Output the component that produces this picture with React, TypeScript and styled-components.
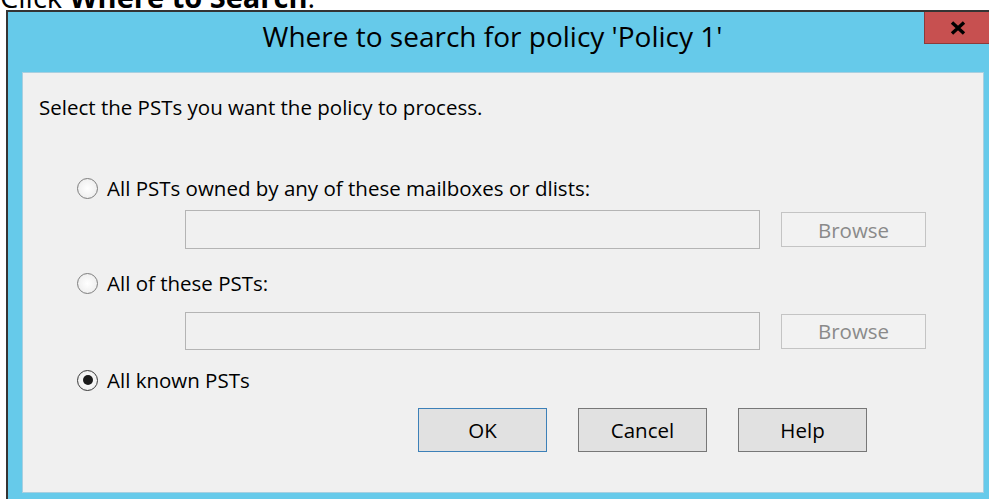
import React, { FunctionComponent } from "react";
import styled, { createGlobalStyle } from "styled-components";

const GlobalStyle = createGlobalStyle`
    html, body {
        margin: 0;
        padding: 0;
        background: #ffffff;
        overflow: hidden;
    }
    body {
        font-family: "Open Sans", "Noto Sans", sans-serif;
        color: #000000;
    }
`;

const Page = styled.div`
    width: 989px;
    height: 499px;
    overflow: hidden;
    background: #ffffff;
`;

// only the lower edge of the caption line shows above the dialog
const Caption = styled.div`
    height: 10px;
    overflow: hidden;
    font-family: "Open Sans", sans-serif;
    font-size: 29px;
    line-height: 29px;
    white-space: nowrap;

    span {
        display: block;
        margin-top: -18px;
    }
`;

const Window = styled.div`
    margin-left: 6px;
    width: 992px;
    box-sizing: border-box;
    border-left: 2px solid #343434;
    border-top: 2px solid #343434;
    background: #66caea;
`;

const TitleBar = styled.div`
    display: flex;
    align-items: flex-start;
    height: 60px;
    padding-left: 53px;
`;

const Title = styled.div`
    flex: 1;
    text-align: center;
    font-size: 28px;
    line-height: 48px;
    color: #000000;
    white-space: nowrap;
`;

const CloseButton = styled.div`
    width: 68px;
    height: 32px;
    margin-right: 6px;
    box-sizing: border-box;
    background: #c75050;
    border: 1px solid #8c3a3a;
    border-top: none;
    display: flex;
    align-items: center;
    justify-content: center;
`;

const Frame = styled.div`
    padding: 0 14px 7px 14px;
`;

const Panel = styled.div`
    height: 421px;
    box-sizing: border-box;
    background: #f0f0f0;
    border: 1px solid #a8cfe0;
    padding: 22px 16px 0 16px;
    display: flex;
    flex-direction: column;
`;

const Intro = styled.div`
    font-size: 20.5px;
    line-height: 24px;
`;

const Options = styled.div`
    display: flex;
    flex-direction: column;
    padding-left: 38px;
`;

const RadioRow = styled.label<{ $gap: number }>`
    display: flex;
    align-items: center;
    gap: 9px;
    height: 24px;
    margin-top: ${(p) => p.$gap}px;
    font-size: 20.5px;
    line-height: 24px;
`;

const RadioCircle = styled.span<{ $checked?: boolean }>`
    width: 21px;
    height: 21px;
    flex: none;
    box-sizing: border-box;
    border-radius: 50%;
    border: 1.5px solid ${(p) => (p.$checked ? "#3a3a3a" : "#7e7e7e")};
    background: radial-gradient(circle, #ffffff 0%, #f2f2f2 60%, #e2e2e2 100%);
    display: flex;
    align-items: center;
    justify-content: center;

    &::after {
        content: "";
        display: ${(p) => (p.$checked ? "block" : "none")};
        width: 10px;
        height: 10px;
        border-radius: 50%;
        background: #1b1b1b;
    }
`;

const FieldRow = styled.div<{ $gap: number; $height: number }>`
    display: flex;
    align-items: center;
    height: ${(p) => p.$height}px;
    margin-top: ${(p) => p.$gap}px;
    padding-left: 108px;
`;

const TextField = styled.div`
    width: 575px;
    height: 100%;
    box-sizing: border-box;
    border: 1.5px solid #b4b4b4;
    background: #f0f0f0;
`;

const BrowseButton = styled.div`
    width: 145px;
    height: 35px;
    margin-left: 21px;
    box-sizing: border-box;
    border: 1.5px solid #c4c4c4;
    background: #f2f2f2;
    color: #8a8a8a;
    font-size: 20.5px;
    display: flex;
    align-items: center;
    justify-content: center;
`;

const ButtonRow = styled.div`
    display: flex;
    gap: 31px;
    margin-top: 16px;
    padding-left: 379px;
`;

const DialogButton = styled.div<{ $default?: boolean }>`
    width: 129px;
    height: 44px;
    box-sizing: border-box;
    border: 1.5px solid ${(p) => (p.$default ? "#3c80b8" : "#777777")};
    background: #e1e1e1;
    font-size: 20.5px;
    display: flex;
    align-items: center;
    justify-content: center;
`;

interface OptionProps {
    label: string;
    gap: number;
    checked?: boolean;
}

const Option: FunctionComponent<OptionProps> = ({ label, gap, checked }) => (
    <RadioRow $gap={gap}>
        <RadioCircle $checked={checked} />
        {label}
    </RadioRow>
);

const CloseGlyph = () => (
    <svg width="16" height="14" viewBox="0 0 16 14">
        <path d="M2 1.5 L14 12.5 M14 1.5 L2 12.5" stroke="#000" strokeWidth="3.4" strokeLinecap="butt" />
    </svg>
);

export default function App() {
    return (
        <Page>
            <GlobalStyle />
            <Caption>
                <span>
                    Click <b>Where to Search</b>.
                </span>
            </Caption>
            <Window>
                <TitleBar>
                    <Title>Where to search for policy 'Policy 1'</Title>
                    <CloseButton>
                        <CloseGlyph />
                    </CloseButton>
                </TitleBar>
                <Frame>
                    <Panel>
                        <Intro>Select the PSTs you want the policy to process.</Intro>
                        <Options>
                            <Option gap={57} label="All PSTs owned by any of these mailboxes or dlists:" />
                            <FieldRow $gap={10} $height={39}>
                                <TextField />
                                <BrowseButton>Browse</BrowseButton>
                            </FieldRow>
                            <Option gap={22} label="All of these PSTs:" />
                            <FieldRow $gap={17} $height={38}>
                                <TextField />
                                <BrowseButton>Browse</BrowseButton>
                            </FieldRow>
                            <Option gap={18} label="All known PSTs" checked />
                        </Options>
                        <ButtonRow>
                            <DialogButton $default>OK</DialogButton>
                            <DialogButton>Cancel</DialogButton>
                            <DialogButton>Help</DialogButton>
                        </ButtonRow>
                    </Panel>
                </Frame>
            </Window>
        </Page>
    );
}
